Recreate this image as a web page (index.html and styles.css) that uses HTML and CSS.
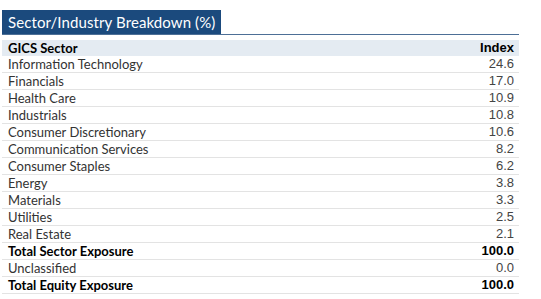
FILE: index.html
```html
<!DOCTYPE html>
<html>
<head>
<meta charset="utf-8">
<link rel="stylesheet" href="styles.css">
</head>
<body>
<div class="panel">
  <div class="title-bar"><h1 class="title">Sector/Industry Breakdown (%)</h1></div>
  <table class="breakdown">
    <thead>
      <tr class="head"><th class="label">GICS Sector</th><th class="num">Index</th></tr>
    </thead>
    <tbody>
      <tr><td class="label">Information Technology</td><td class="num">24.6</td></tr>
      <tr><td class="label">Financials</td><td class="num">17.0</td></tr>
      <tr><td class="label">Health Care</td><td class="num">10.9</td></tr>
      <tr><td class="label">Industrials</td><td class="num">10.8</td></tr>
      <tr><td class="label">Consumer Discretionary</td><td class="num">10.6</td></tr>
      <tr><td class="label">Communication Services</td><td class="num">8.2</td></tr>
      <tr><td class="label">Consumer Staples</td><td class="num">6.2</td></tr>
      <tr><td class="label">Energy</td><td class="num">3.8</td></tr>
      <tr><td class="label">Materials</td><td class="num">3.3</td></tr>
      <tr><td class="label">Utilities</td><td class="num">2.5</td></tr>
      <tr><td class="label">Real Estate</td><td class="num">2.1</td></tr>
      <tr class="total"><td class="label">Total Sector Exposure</td><td class="num">100.0</td></tr>
      <tr><td class="label">Unclassified</td><td class="num">0.0</td></tr>
      <tr class="total"><td class="label">Total Equity Exposure</td><td class="num">100.0</td></tr>
    </tbody>
  </table>
</div>
</body>
</html>
```
FILE: styles.css
```css
html, body {
  margin: 0;
  padding: 0;
  background: #ffffff;
}
.panel {
  width: 517px;
  margin: 10px 0 0 2px;
}
.title-bar {
  border-bottom: 1px solid #4d6f96;
  display: flex;
}
.title {
  margin: 0;
  background: #1b4a7d;
  color: #ffffff;
  font-family: Lato, "Liberation Sans", sans-serif;
  font-weight: 400;
  font-size: 15px;
  line-height: 24px;
  height: 24px;
  padding: 0 6px;
  letter-spacing: 0.1px;
  white-space: nowrap;
}
.breakdown {
  width: 100%;
  border-collapse: collapse;
  margin-top: 5px;
}
.breakdown th, .breakdown td {
  padding: 0;
  height: 16px;
  line-height: 16px;
  font-size: 13px;
  border-bottom: 1px solid #e3e3e3;
}
.breakdown .label {
  text-align: left;
  padding-left: 6px;
  font-family: Lato, "Liberation Sans", sans-serif;
  color: #333333;
}
.breakdown .num {
  text-align: right;
  padding-right: 5px;
  font-family: "Liberation Sans", Arial, sans-serif;
  color: #444444;
}
.head th {
  background: #e4ebf2;
  border-bottom: none;
  height: 16px;
}
.head .label, .head .num, .total .label, .total .num {
  font-weight: 700;
  color: #000000;
}
```
